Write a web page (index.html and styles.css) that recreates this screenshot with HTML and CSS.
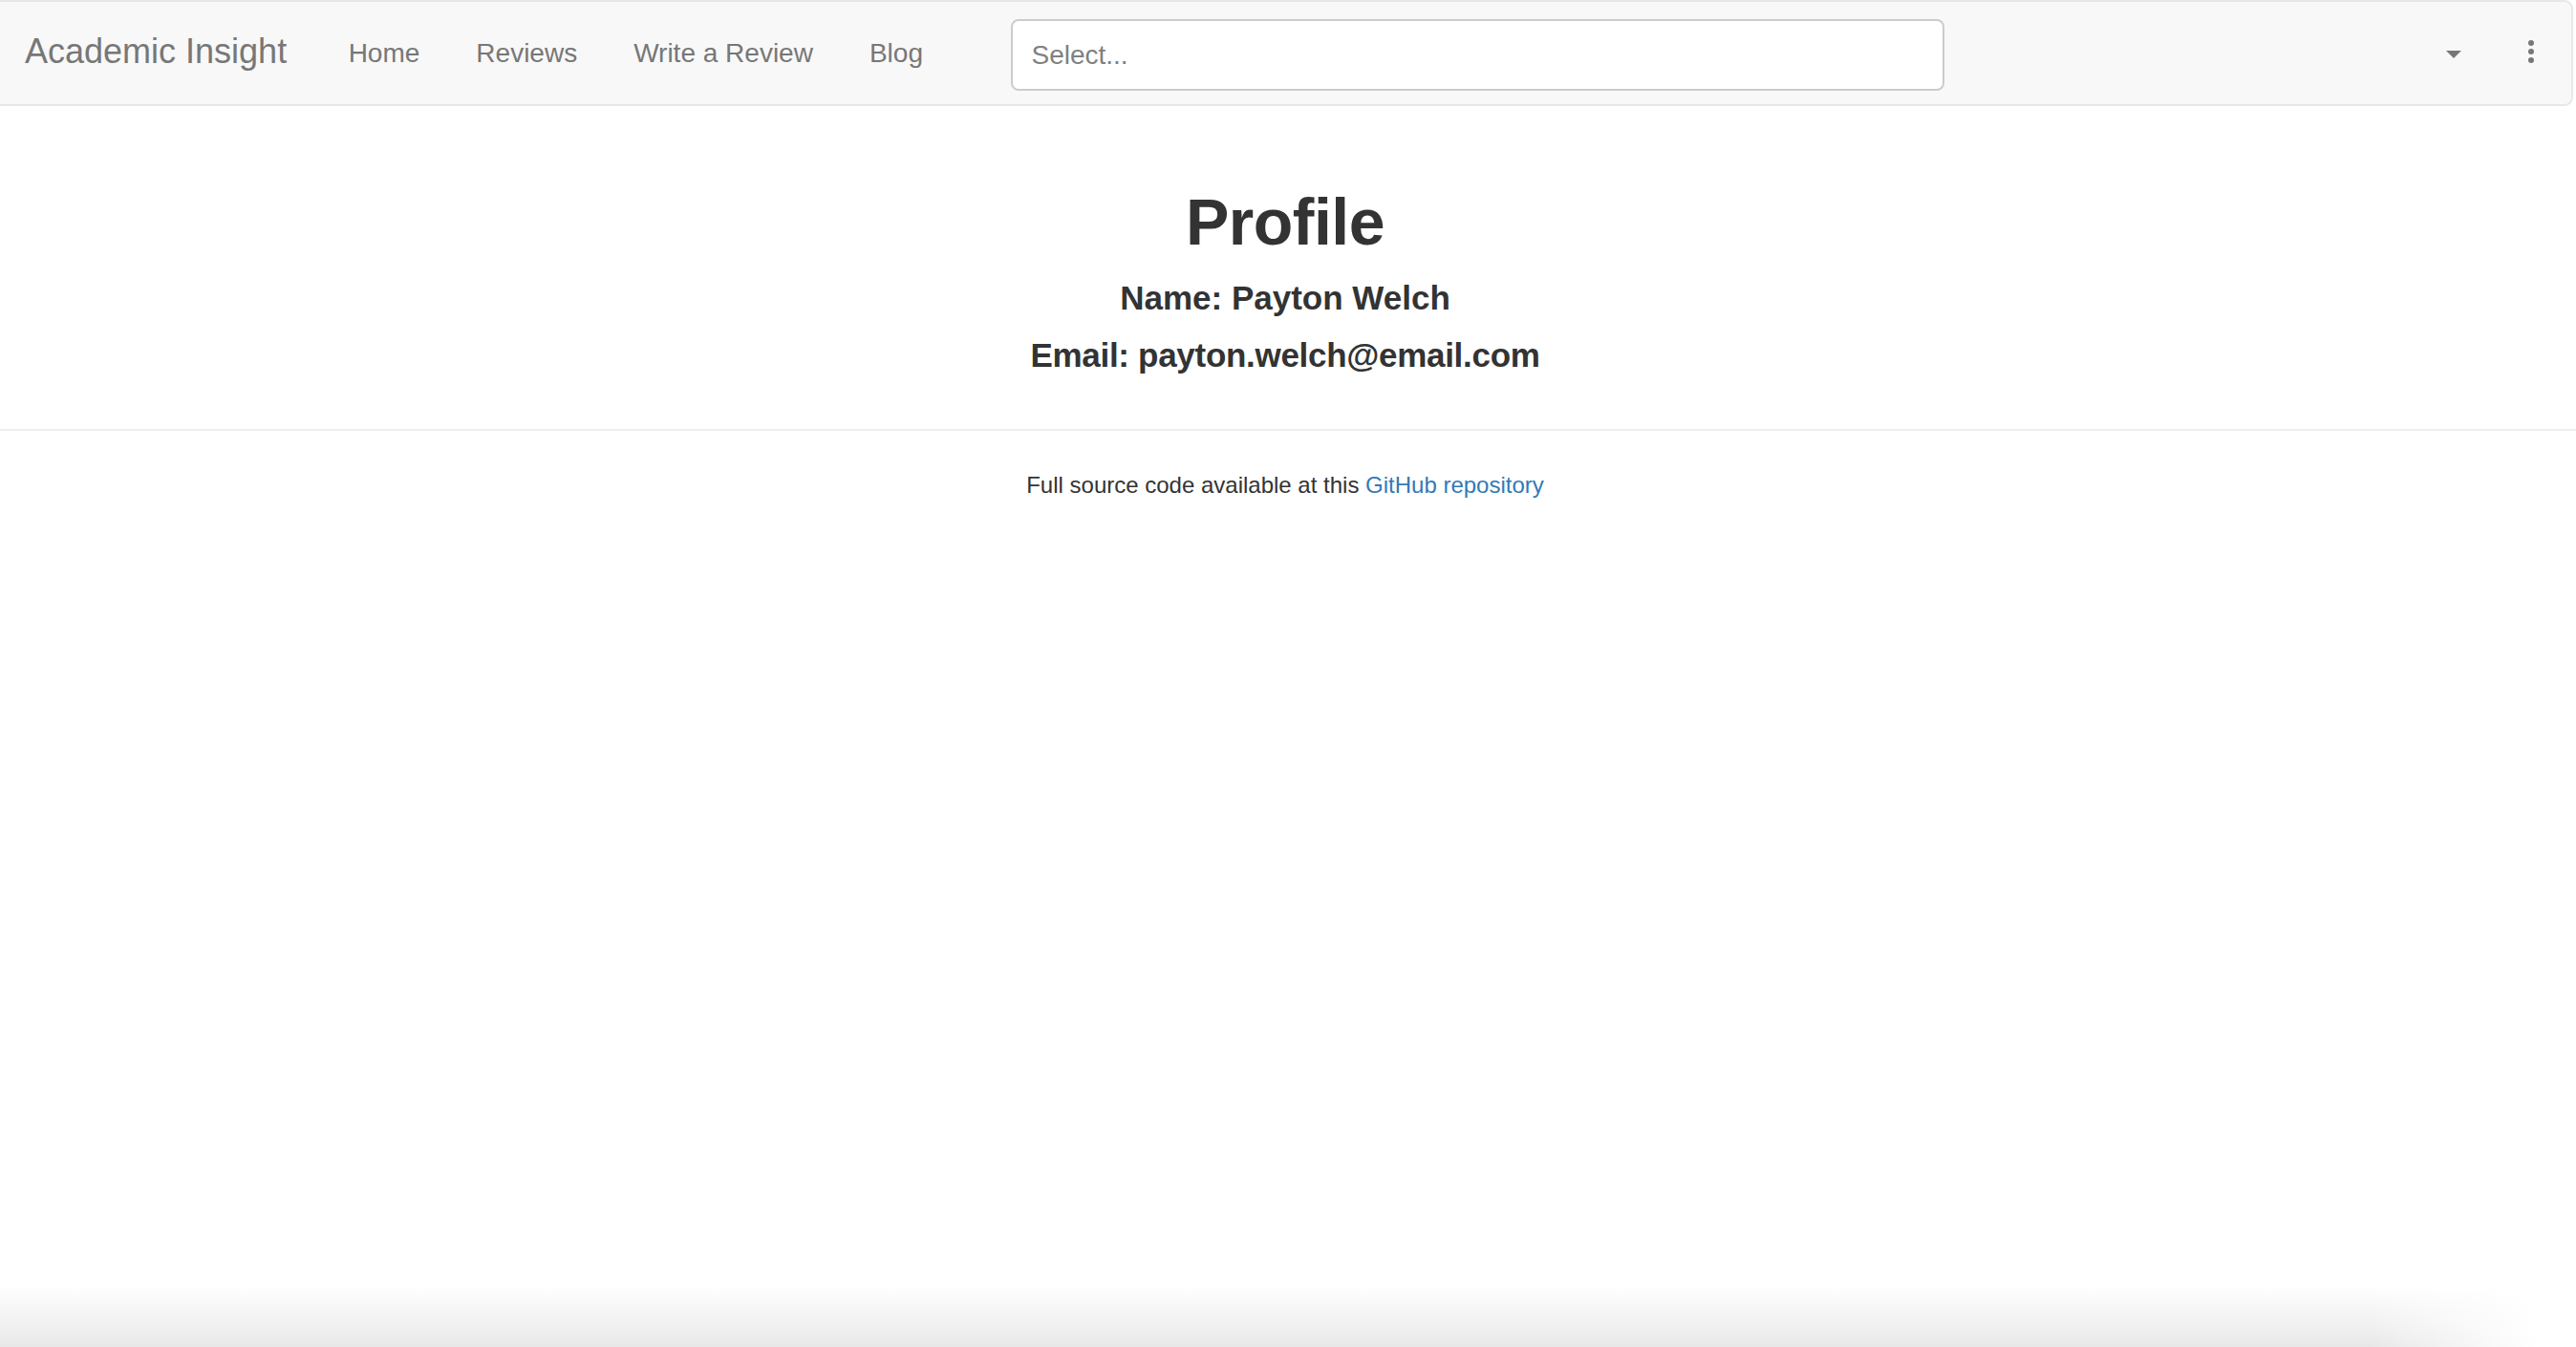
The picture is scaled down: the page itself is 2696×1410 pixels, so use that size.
FILE: index.html
```html
<!DOCTYPE html>
<html lang="en">
<head>
<meta charset="utf-8">
<title>Academic Insight</title>
<link rel="stylesheet" href="styles.css">
</head>
<body>
<nav class="navbar">
  <a class="brand" href="#">Academic Insight</a>
  <ul class="nav">
    <li><a href="#">Home</a></li>
    <li><a href="#">Reviews</a></li>
    <li><a href="#">Write a Review</a></li>
    <li><a href="#">Blog</a></li>
  </ul>
  <div class="select"><span class="placeholder">Select...</span></div>
  <div class="tools">
    <span class="caret"></span>
    <span class="kebab"><i></i><i></i><i></i></span>
  </div>
</nav>
<main class="content">
  <h1 class="title">Profile</h1>
  <h4 class="info">Name: Payton Welch</h4>
  <h4 class="info email">Email: payton.welch@email.com</h4>
</main>
<hr class="rule">
<footer class="footer">Full source code available at this <a href="#">GitHub repository</a></footer>
<div class="bottom-shade"></div>
</body>
</html>
```

FILE: styles.css
```css
html, body {
  margin: 0;
  padding: 0;
  background: #fff;
  font-family: "Liberation Sans", Arial, Helvetica, sans-serif;
  color: #333;
}

body {
  padding-right: 6px;
}

.navbar {
  display: flex;
  align-items: center;
  height: 107px;
  background: #f8f8f8;
  border-top: 2px solid #e7e7e7;
  border-bottom: 2px solid #e7e7e7;
  border-right: 2px solid #e7e7e7;
  border-radius: 0 9px 9px 0;
  margin-right: -3px;
}

.brand {
  font-size: 36px;
  color: #777;
  text-decoration: none;
  padding: 0 35px 0 26px;
  line-height: 50px;
  margin-top: -3px;
}

.nav {
  display: flex;
  list-style: none;
  margin: 0;
  padding: 0;
}

.nav a {
  display: block;
  font-size: 28px;
  line-height: 40px;
  color: #777;
  text-decoration: none;
  padding: 0 29.5px;
}

.select {
  box-sizing: border-box;
  width: 977px;
  height: 75px;
  margin-left: 63px;
  margin-top: 3px;
  background: #fff;
  border: 2px solid #ccc;
  border-radius: 8px;
  display: flex;
  align-items: center;
  padding-left: 19px;
}

.placeholder {
  font-size: 28px;
  color: #808080;
  margin-top: 2px;
}

.tools {
  margin-left: auto;
  display: flex;
  align-items: center;
  padding-right: 39px;
}

.caret {
  width: 0;
  height: 0;
  border-left: 8px solid transparent;
  border-right: 8px solid transparent;
  border-top: 8px solid #777;
  margin-top: 2px;
  margin-right: 70px;
}

.kebab {
  display: flex;
  flex-direction: column;
  gap: 2.5px;
  margin-top: -3px;
}

.kebab i {
  display: block;
  width: 6.5px;
  height: 6.5px;
  border-radius: 50%;
  background: #777;
}

.content {
  text-align: center;
  padding-top: 81px;
}

.title {
  margin: 0;
  font-size: 68px;
  line-height: 80px;
  font-weight: bold;
  letter-spacing: -0.5px;
}

.info {
  margin: 0;
  font-size: 35px;
  line-height: 57px;
  font-weight: bold;
}

.title + .info {
  margin-top: 11px;
}

.info.email {
  margin-top: 3px;
  letter-spacing: -0.3px;
}

.rule {
  margin: 49px -6px 0 0;
  border: 0;
  border-top: 2px solid #eee;
  height: 0;
}

.footer {
  text-align: center;
  font-size: 24px;
  line-height: 34px;
  margin-top: 40px;
}

.footer a {
  color: #337ab7;
  text-decoration: none;
}

.bottom-shade {
  position: fixed;
  left: 0;
  right: 0;
  bottom: 0;
  height: 64px;
  background: linear-gradient(to bottom, rgba(232,232,232,0), rgba(232,232,232,1));
  -webkit-mask-image: linear-gradient(to right, #000 92%, transparent 98.5%);
  mask-image: linear-gradient(to right, #000 92%, transparent 98.5%);
  pointer-events: none;
}
```
